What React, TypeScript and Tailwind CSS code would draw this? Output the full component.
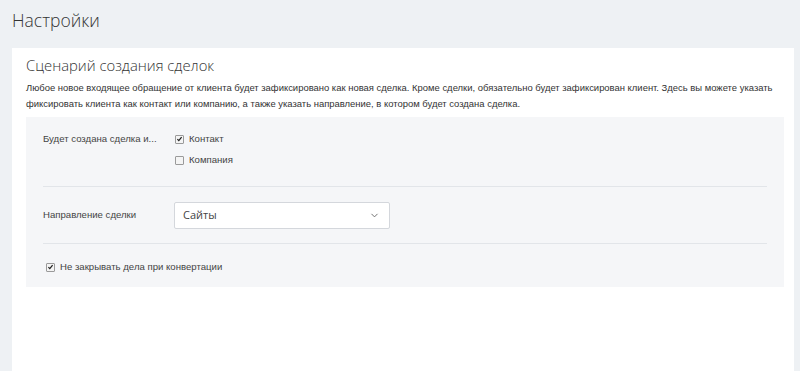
import { ChevronDown } from 'lucide-react';

function Check({ checked }: { checked?: boolean }) {
  return (
    <span className="w-[9px] h-[9px] border border-[#9a9a9a] bg-[#f4f4f4] rounded-[1px] flex items-center justify-center shrink-0">
      {checked && (
        <svg viewBox="0 0 10 10" className="w-[8px] h-[8px]">
          <path d="M2 5.2 L4 7.3 L8 2.4" stroke="#222" strokeWidth="1.8" fill="none" />
        </svg>
      )}
    </span>
  );
}

export default function App() {
  return (
    <div className="w-[800px] h-[371px] bg-[#eef1f4] overflow-hidden font-['Liberation_Sans',Arial,sans-serif]">
      <h1 className="px-3 pt-[8px] h-[48px] text-[17.5px] font-light text-[#333] font-['Open_Sans',sans-serif] leading-[25px]">
        Настройки
      </h1>

      <div className="ml-3 mr-[6px] bg-white h-[323px] pl-[14px] pr-[10px] pt-[6px]">
        <h2 className="text-[14.8px] font-light text-[#333] font-['Open_Sans',sans-serif] leading-[22px]">
          Сценарий создания сделок
        </h2>
        <p className="mt-[4px] text-[9.45px] leading-[16px] text-[#333]">
          Любое новое входящее обращение от клиента будет зафиксировано как новая сделка. Кроме сделки, обязательно будет зафиксирован клиент. Здесь вы можете указать фиксировать клиента как контакт или компанию, а также указать направление, в котором будет создана сделка.
        </p>

        <div className="mt-[5px] bg-[#f5f6f8] h-[170px] px-[17px] text-[9.6px] text-[#444]">
          <div className="flex pt-[15px] pb-[19px] border-b border-[#e2e5e9]">
            <div className="w-[132px] leading-[14px]">Будет создана сделка и...</div>
            <div className="flex flex-col gap-[7px]">
              <label className="flex items-center gap-[5px] leading-[14px]">
                <Check checked />
                Контакт
              </label>
              <label className="flex items-center gap-[5px] leading-[14px]">
                <Check />
                Компания
              </label>
            </div>
          </div>

          <div className="flex items-center h-[57px] border-b border-[#e2e5e9]">
            <div className="w-[131px]">Направление сделки</div>
            <div className="w-[216px] h-[27px] bg-white border border-[#d4d7dc] rounded-[2px] flex items-center justify-between pl-[8px] pr-[9px]">
              <span className="text-[11px] text-[#444] font-['Open_Sans',sans-serif]">Сайты</span>
              <ChevronDown className="w-[11px] h-[11px] text-[#666]" strokeWidth={2} />
            </div>
          </div>

          <label className="flex items-center gap-[5px] pl-[3px] pt-[16px] leading-[14px]">
            <Check checked />
            Не закрывать дела при конвертации
          </label>
        </div>
      </div>
    </div>
  );
}
